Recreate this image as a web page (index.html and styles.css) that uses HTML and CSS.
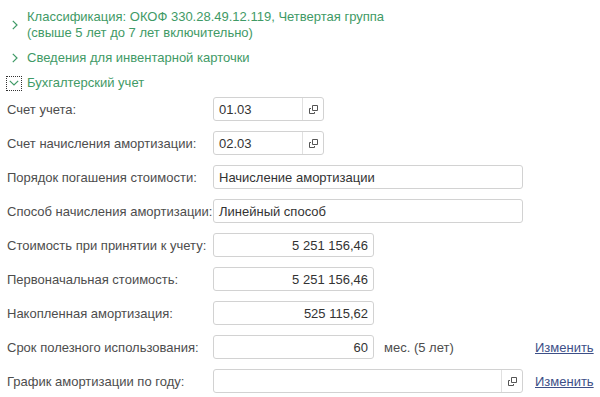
FILE: index.html
```html
<!DOCTYPE html>
<html lang="ru">
<head>
<meta charset="utf-8">
<title>Бухгалтерский учет</title>
<link rel="stylesheet" href="styles.css">
</head>
<body>
<div class="form">
  <div class="group group-first">
    <span class="toggle"><svg width="6" height="10" viewBox="0 0 6 10"><path d="M0.8 0.8 L5 5 L0.8 9.2" fill="none" stroke="#3f9a66" stroke-width="1.2"/></svg></span>
    <div class="group-title">Классификация: ОКОФ 330.28.49.12.119, Четвертая группа<br>(свыше 5 лет до 7 лет включительно)</div>
  </div>
  <div class="group">
    <span class="toggle"><svg width="6" height="10" viewBox="0 0 6 10"><path d="M0.8 0.8 L5 5 L0.8 9.2" fill="none" stroke="#3f9a66" stroke-width="1.2"/></svg></span>
    <div class="group-title">Сведения для инвентарной карточки</div>
  </div>
  <div class="group group-open">
    <span class="toggle focused"><svg width="10" height="6" viewBox="0 0 10 6"><path d="M0.8 0.8 L5 5 L9.2 0.8" fill="none" stroke="#3f9a66" stroke-width="1.2"/></svg></span>
    <div class="group-title">Бухгалтерский учет</div>
  </div>

  <div class="fields">
    <div class="label">Счет учета:</div>
    <div class="field"><div class="input w-short has-btn"><span class="value">01.03</span><span class="btn"><svg class="open-icon" width="9" height="9" viewBox="0 0 9 9"><path d="M3.5 0.5 H8.5 V5.5 H3.5 Z M2 3.5 H0.5 V8.5 H5.5 V7" fill="none" stroke="#555" stroke-width="1"/></svg></span></div></div>
    <div></div>

    <div class="label">Счет начисления амортизации:</div>
    <div class="field"><div class="input w-short has-btn"><span class="value">02.03</span><span class="btn"><svg class="open-icon" width="9" height="9" viewBox="0 0 9 9"><path d="M3.5 0.5 H8.5 V5.5 H3.5 Z M2 3.5 H0.5 V8.5 H5.5 V7" fill="none" stroke="#555" stroke-width="1"/></svg></span></div></div>
    <div></div>

    <div class="label">Порядок погашения стоимости:</div>
    <div class="field"><div class="input w-full"><span class="value">Начисление амортизации</span></div></div>
    <div></div>

    <div class="label">Способ начисления амортизации:</div>
    <div class="field"><div class="input w-full"><span class="value">Линейный способ</span></div></div>
    <div></div>

    <div class="label">Стоимость при принятии к учету:</div>
    <div class="field"><div class="input w-num"><span class="value num">5 251 156,46</span></div></div>
    <div></div>

    <div class="label">Первоначальная стоимость:</div>
    <div class="field"><div class="input w-num"><span class="value num">5 251 156,46</span></div></div>
    <div></div>

    <div class="label">Накопленная амортизация:</div>
    <div class="field"><div class="input w-num"><span class="value num">525 115,62</span></div></div>
    <div></div>

    <div class="label">Срок полезного использования:</div>
    <div class="field"><div class="input w-num"><span class="value num">60</span></div><span class="note">мес. (5 лет)</span></div>
    <div class="link-cell"><a class="link" href="#">Изменить</a></div>

    <div class="label">График амортизации по году:</div>
    <div class="field"><div class="input w-full has-btn"><span class="value"></span><span class="btn"><svg class="open-icon" width="9" height="9" viewBox="0 0 9 9"><path d="M3.5 0.5 H8.5 V5.5 H3.5 Z M2 3.5 H0.5 V8.5 H5.5 V7" fill="none" stroke="#555" stroke-width="1"/></svg></span></div></div>
    <div class="link-cell"><a class="link" href="#">Изменить</a></div>
  </div>
</div>
</body>
</html>
```
FILE: styles.css
```css
html, body {
  margin: 0;
  padding: 0;
  background: #ffffff;
}

body {
  font-family: "Liberation Sans", Arial, sans-serif;
  font-size: 13px;
  color: #4d4d4d;
}

.form {
  padding: 9px 0 0 7px;
}

.group {
  display: flex;
  align-items: center;
  margin-bottom: 9px;
}

.group-title {
  color: #3f9a66;
  line-height: 16px;
}

.toggle {
  width: 20px;
  flex: 0 0 20px;
  display: flex;
  align-items: center;
  justify-content: flex-start;
  padding-left: 5px;
  box-sizing: border-box;
}

.toggle svg {
  display: block;
}

.group-open {
  margin-bottom: 6px;
}

.toggle.focused {
  width: 16px;
  flex: 0 0 16px;
  height: 15px;
  margin-left: -1px;
  margin-right: 5px;
  padding-left: 2px;
  border: 1px dotted #333;
  box-sizing: border-box;
}

.fields {
  display: grid;
  grid-template-columns: 206px 310px auto;
  grid-auto-rows: 24px;
  row-gap: 10px;
  align-items: center;
}

.label {
  white-space: nowrap;
}

.field {
  display: flex;
  align-items: center;
  height: 24px;
}

.input {
  height: 24px;
  box-sizing: border-box;
  border: 1px solid #d2d2d2;
  border-radius: 3px;
  display: flex;
  align-items: stretch;
  background: #fff;
}

.w-short { width: 111px; }
.w-full { width: 310px; }
.w-num { width: 161px; }

.value {
  flex: 1;
  display: flex;
  align-items: center;
  padding: 0 5px;
  color: #333;
  white-space: nowrap;
  overflow: hidden;
}

.value.num {
  justify-content: flex-end;
}

.btn {
  width: 20px;
  border-left: 1px solid #e0e0e0;
  display: flex;
  align-items: center;
  justify-content: center;
}

.open-icon {
  display: block;
}

.note {
  margin-left: 10px;
  color: #4d4d4d;
}

.link-cell {
  padding-left: 12px;
}

.link {
  color: #3d4f87;
  text-decoration: underline;
}
```
